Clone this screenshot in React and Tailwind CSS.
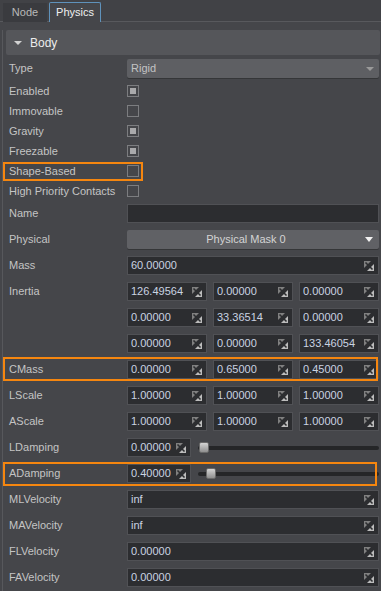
import React from 'react';

const FONT = { fontFamily: '"Liberation Sans", Arial, sans-serif' };

function SpinIcon() {
  return (
    <svg width="10" height="10" viewBox="0 0 10 10" className="shrink-0">
      <polygon points="0,0 7,0 0,7" fill="#808080" />
      <polygon points="10,3 10,10 3,10" fill="#bcbcbc" />
      <line x1="1.5" y1="1.5" x2="8.5" y2="8.5" stroke="#2c2d30" strokeWidth="1.6" />
    </svg>
  );
}

function Field({ value, icon = false, className = '' }) {
  return (
    <div
      className={`flex h-[19px] items-center overflow-hidden border border-[#505155] bg-[#2c2d30] pl-[3px] pr-[4px] ${className}`}
    >
      <span className="flex-1 overflow-hidden whitespace-nowrap text-[11px] text-[#cad3e2]">{value}</span>
      {icon ? <SpinIcon /> : null}
    </div>
  );
}

function Checkbox({ checked }) {
  return (
    <div className="flex h-[12px] w-[12px] items-center justify-center border border-[#7c7d80]">
      {checked ? <div className="h-[6px] w-[6px] bg-[#a9a9ab]" /> : null}
    </div>
  );
}

function Label({ children }) {
  return (
    <div className="w-[127px] shrink-0 whitespace-nowrap pl-[9px] text-[11px] text-[#c4c4c4]">{children}</div>
  );
}

function Highlight({ className }) {
  return <div className={`pointer-events-none absolute border-2 border-[#f5860f] ${className}`} />;
}

function Slider({ pos }) {
  return (
    <div className="relative ml-[7px] h-[19px] flex-1">
      <div className="absolute left-0 right-0 top-[8px] h-[4px] rounded-full bg-[#252628]" />
      <div
        className="absolute top-[4px] h-[11px] w-[10px] rounded-[2px] border border-[#6a6a6a] bg-gradient-to-b from-[#d4d4d4] to-[#8f8f8f]"
        style={{ left: pos }}
      />
    </div>
  );
}

const checks = [
  ['Enabled', true],
  ['Immovable', false],
  ['Gravity', true],
  ['Freezable', true],
  ['Shape-Based', false],
  ['High Priority Contacts', false]
];

const triples = [
  ['Inertia', ['126.49564', '0.00000', '0.00000']],
  ['', ['0.00000', '33.36514', '0.00000']],
  ['', ['0.00000', '0.00000', '133.46054']],
  ['CMass', ['0.00000', '0.65000', '0.45000']],
  ['LScale', ['1.00000', '1.00000', '1.00000']],
  ['AScale', ['1.00000', '1.00000', '1.00000']]
];

export default function App() {
  return (
    <div className="h-[591px] w-[381px] overflow-hidden bg-[#45464a]" style={FONT}>
      {/* tabs */}
      <div className="relative flex h-[22px] items-end border-b border-[#58595d] bg-[#414246] pl-[3px]">
        <div className="mb-[-1px] flex h-[19px] w-[44px] items-center justify-center bg-[#3a3b3f] text-[11px] text-[#b9b9b9]">
          Node
        </div>
        <div className="mb-[-1px] ml-[2px] flex h-[20px] w-[52px] items-center justify-center rounded-t-[2px] border border-b-0 border-[#5f92bb] bg-[#45464a] text-[11px] text-[#f0f0f0]">
          Physics
        </div>
      </div>

      <div className="ml-[2px] h-full border-l border-[#57585c] pb-4">
        {/* section header */}
        <div className="ml-[3px] mr-[1px] mt-[8px] flex h-[25px] items-center rounded-[2px] bg-[#55565a] pl-[8px]">
          <div className="h-0 w-0 border-x-[4px] border-t-[4px] border-x-transparent border-t-[#d2d2d2]" />
          <span className="ml-[8px] text-[12px] text-[#ececec]">Body</span>
        </div>

        <div className="-ml-[3px]">
          {/* Type */}
          <div className="mt-[4px] flex h-[19px] items-center pr-[2px]">
            <Label>Type</Label>
            <div className="flex h-[19px] flex-1 items-center rounded-[2px] bg-[#5e5f63] pl-[4px] pr-[5px] shadow-[0_1px_0_#353638]">
              <span className="flex-1 text-[11px] text-[#c3c3c3]">Rigid</span>
              <div className="h-0 w-0 border-x-[4px] border-t-[4px] border-x-transparent border-t-[#9a9a9a]" />
            </div>
          </div>

          {/* checkboxes */}
          <div className="mt-[3px]">
            {checks.map(([label, checked]) => (
              <div key={label} className="relative flex h-[20px] items-center">
                <Label>{label}</Label>
                <Checkbox checked={checked} />
                {label === 'Shape-Based' ? <Highlight className="left-[3px] top-[1px] h-[19px] w-[140px]" /> : null}
              </div>
            ))}
          </div>

          <div className="mt-[3px] flex flex-col gap-[7px] pr-[2px]">
            <div className="flex items-center">
              <Label>Name</Label>
              <div className="h-[19px] flex-1 border border-[#505155] bg-[#2c2d30]" />
            </div>

            <div className="flex items-center">
              <Label>Physical</Label>
              <div className="relative flex h-[19px] flex-1 items-center justify-center rounded-[2px] bg-[#606165] pr-[14px] shadow-[0_1px_0_#353638]">
                <span className="text-[11px] text-[#d4d4d4]">Physical Mask 0</span>
                <div className="absolute right-[6px] top-[7px] h-0 w-0 border-x-[4px] border-t-[5px] border-x-transparent border-t-[#f2f2f2]" />
              </div>
            </div>

            <div className="flex items-center">
              <Label>Mass</Label>
              <Field value="60.00000" icon className="flex-1" />
            </div>

            {triples.map(([label, vals], i) => (
              <div key={i} className="relative flex items-center">
                <Label>{label}</Label>
                <div className="grid flex-1 grid-cols-3 gap-[6px]">
                  {vals.map((v, j) => (
                    <Field key={j} value={v} icon />
                  ))}
                </div>
                {label === 'CMass' ? <Highlight className="-bottom-[2px] -top-[3px] left-[3px] right-[1px]" /> : null}
              </div>
            ))}

            <div className="flex items-center">
              <Label>LDamping</Label>
              <Field value="0.00000" icon className="w-[64px]" />
              <Slider pos={1} />
            </div>

            <div className="relative flex items-center">
              <Label>ADamping</Label>
              <Field value="0.40000" icon className="w-[64px]" />
              <Slider pos={8} />
              <Highlight className="-bottom-[3px] -top-[2px] left-[3px] right-[2px]" />
            </div>

            {[
              ['MLVelocity', 'inf'],
              ['MAVelocity', 'inf'],
              ['FLVelocity', '0.00000'],
              ['FAVelocity', '0.00000']
            ].map(([label, v]) => (
              <div key={label} className="flex items-center">
                <Label>{label}</Label>
                <Field value={v} icon className="flex-1" />
              </div>
            ))}
          </div>
        </div>
      </div>
    </div>
  );
}
